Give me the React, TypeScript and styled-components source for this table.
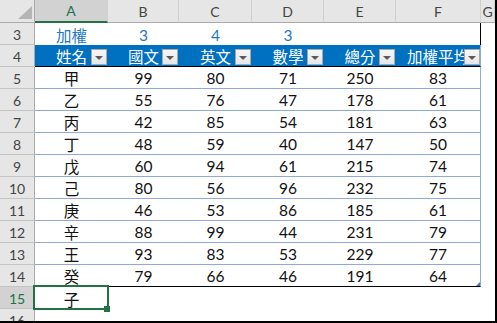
import React from 'react';
import styled, { createGlobalStyle, css } from 'styled-components';

const GlobalStyle = createGlobalStyle`
  html, body {
    margin: 0;
    padding: 0;
    background: #fff;
  }
  body {
    font-family: 'Lato', 'Noto Sans CJK TC', sans-serif;
  }
`;

const GREEN = '#217346';
const TABLE_LINE = '#8EA9DB';

const Window = styled.div`
  width: 497px;
  height: 323px;
  box-sizing: border-box;
  border-right: 2px solid #000;
  border-bottom: 2px solid #000;
  overflow: hidden;
  background: #fff;
`;

const Sheet = styled.div`
  display: grid;
  grid-template-columns: 35px 73px 71px 73px 72px 72px 85px 1fr;
  grid-template-rows: 23px;
  grid-auto-rows: 22px;
`;

const Corner = styled.div`
  box-sizing: border-box;
  background: #e6e6e6;
  border-right: 1px solid #ababab;
  border-bottom: 1px solid #ababab;
  display: flex;
  justify-content: flex-end;
  align-items: flex-end;
  padding: 0 2px 3px 0;
`;

const ColHead = styled.div<{ $active?: boolean }>`
  box-sizing: border-box;
  background: ${p => (p.$active ? '#d2d2d2' : '#e6e6e6')};
  color: ${p => (p.$active ? GREEN : '#444')};
  border-right: 1px solid #cfcfcf;
  border-bottom: ${p => (p.$active ? `2px solid ${GREEN}` : '1px solid #ababab')};
  font-size: 14px;
  display: flex;
  align-items: center;
  justify-content: center;
  overflow: hidden;
`;

const RowHead = styled.div<{ $active?: boolean }>`
  box-sizing: border-box;
  background: ${p => (p.$active ? '#d2d2d2' : '#e6e6e6')};
  color: ${p => (p.$active ? GREEN : '#444')};
  border-right: 1px solid #ababab;
  border-bottom: 1px solid #c3c3c3;
  font-size: 14px;
  display: flex;
  align-items: center;
  justify-content: center;
  padding-top: 1px;
`;

type Kind = 'plain' | 'head' | 'body' | 'last';

const Cell = styled.div<{
  $kind: Kind;
  $edge?: string;
  $blue?: boolean;
  $selected?: boolean;
  $handle?: boolean;
}>`
  box-sizing: border-box;
  position: relative;
  display: flex;
  align-items: center;
  justify-content: center;
  white-space: nowrap;
  overflow: hidden;
  font-size: 15.5px;
  padding-top: 1px;
  color: ${p => (p.$blue ? '#1f77c9' : '#111')};
  ${p => p.$edge && `border-right: 1px solid ${p.$edge};`}
  ${p =>
    p.$kind === 'head' &&
    css`
      background: #0070c0;
      color: #fff;
      border-bottom: 1px solid #000;
    `}
  ${p => p.$kind === 'body' && `border-bottom: 1px solid ${TABLE_LINE};`}
  ${p => p.$kind === 'last' && 'border-bottom: 1px solid #000;'}
  ${p =>
    p.$selected &&
    css`
      overflow: visible;
      z-index: 2;
      &::after {
        content: '';
        position: absolute;
        top: -2px;
        left: -2px;
        right: -1px;
        bottom: -1px;
        border: 2px solid ${GREEN};
      }
    `}
  ${p =>
    p.$handle &&
    css`
      &::after {
        content: '';
        position: absolute;
        right: 0;
        bottom: 0;
        border-left: 4px solid transparent;
        border-bottom: 4px solid #4a6fc7;
      }
    `}
`;

const FillHandle = styled.span`
  position: absolute;
  right: -2px;
  bottom: -3px;
  width: 6px;
  height: 6px;
  background: ${GREEN};
  z-index: 3;
`;

const FilterButton = styled.span<{ $flush?: boolean }>`
  position: absolute;
  right: ${p => (p.$flush ? 0 : 1)}px;
  bottom: 1px;
  width: 16px;
  height: 16px;
  box-sizing: border-box;
  border: 1px solid #a8a8a8;
  background: linear-gradient(#f7f7f7, #e6e6e6);
  display: flex;
  align-items: center;
  justify-content: center;
  padding-top: 2px;
  &::after {
    content: '';
    border-left: 4px solid transparent;
    border-right: 4px solid transparent;
    border-top: 4px solid #5a5a5a;
  }
`;

const columns = ['A', 'B', 'C', 'D', 'E', 'F', 'G'];
const headers = ['姓名', '國文', '英文', '數學', '總分', '加權平均'];

const data: (string | number)[][] = [
  ['甲', 99, 80, 71, 250, 83],
  ['乙', 55, 76, 47, 178, 61],
  ['丙', 42, 85, 54, 181, 63],
  ['丁', 48, 59, 40, 147, 50],
  ['戊', 60, 94, 61, 215, 74],
  ['己', 80, 56, 96, 232, 75],
  ['庚', 46, 53, 86, 185, 61],
  ['辛', 88, 99, 44, 231, 79],
  ['王', 93, 83, 53, 229, 77],
  ['癸', 79, 66, 46, 191, 64],
];

const weights = ['加權', '3', '4', '3', '', '', ''];

const CornerMark = () => (
  <svg width="14" height="13" viewBox="0 0 14 13">
    <polygon points="14,0 14,13 0,13" fill="#b5b5b5" />
  </svg>
);

export default function App() {
  return (
    <Window>
      <GlobalStyle />
      <Sheet>
        <Corner>
          <CornerMark />
        </Corner>
        {columns.map(c => (
          <ColHead key={c} $active={c === 'A'}>
            {c}
          </ColHead>
        ))}

        <RowHead>3</RowHead>
        {weights.map((w, i) => (
          <Cell key={i} $kind="plain" $blue $edge={i === 5 ? '#000' : undefined}>
            {w}
          </Cell>
        ))}

        <RowHead>4</RowHead>
        {headers.map((h, i) => (
          <Cell key={h} $kind="head" $edge={i === 5 ? TABLE_LINE : undefined}>
            {h}
            <FilterButton $flush={i === 5} />
          </Cell>
        ))}
        <Cell $kind="plain" />

        {data.map((row, r) => {
          const last = r === data.length - 1;
          return (
            <React.Fragment key={r}>
              <RowHead>{r + 5}</RowHead>
              {row.map((v, i) => (
                <Cell
                  key={i}
                  $kind={last ? 'last' : 'body'}
                  $edge={i === 5 ? TABLE_LINE : undefined}
                  $handle={last && i === 5}
                >
                  {v}
                </Cell>
              ))}
              <Cell $kind="plain" />
            </React.Fragment>
          );
        })}

        <RowHead $active>15</RowHead>
        <Cell $kind="plain" $selected>
          子
          <FillHandle />
        </Cell>
        {[1, 2, 3, 4, 5, 6].map(i => (
          <Cell key={i} $kind="plain" />
        ))}

        <RowHead>16</RowHead>
        {[0, 1, 2, 3, 4, 5, 6].map(i => (
          <Cell key={i} $kind="plain" />
        ))}
      </Sheet>
    </Window>
  );
}
